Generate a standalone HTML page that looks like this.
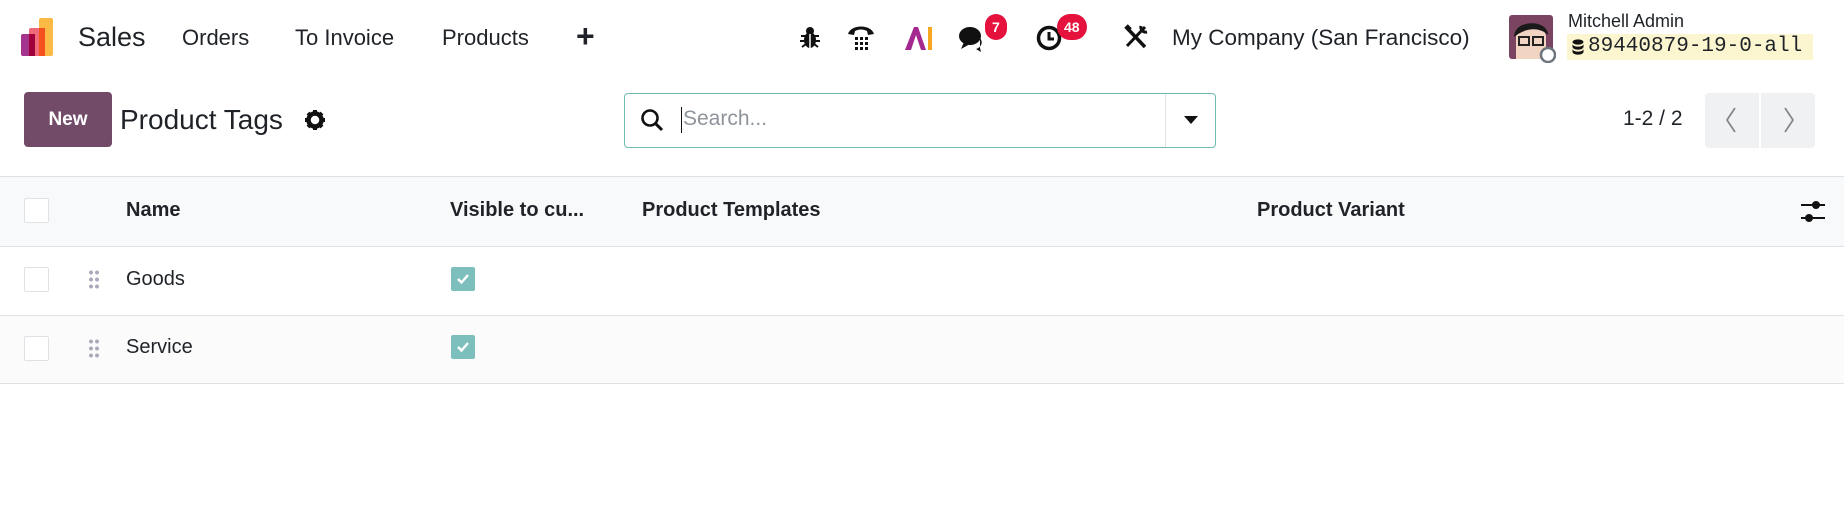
<!DOCTYPE html>
<html><head><meta charset="utf-8"><style>
*{box-sizing:border-box;margin:0;padding:0}
body{width:1844px;height:511px;background:#fff;font-family:"Liberation Sans",sans-serif;color:#1f2328;position:relative;overflow:hidden}
.a{position:absolute;white-space:nowrap}
.nav{font-size:22px}
.badge{position:absolute;background:#e4123c;color:#fff;font-size:14px;font-weight:bold;border-radius:14px;height:26px;line-height:26px;text-align:center;padding:0 7px}
.cb{position:absolute;width:25px;height:25px;border:1px solid #dee2e6;background:#fff;border-radius:2px}
.ck{position:absolute;width:24px;height:24px;background:#7dbfbd;border-radius:2px}
.th{font-size:20px;font-weight:bold;top:199px}
.td{font-size:20px}
.hl{position:absolute;left:0;width:1844px;height:1px;background:#dee2e6}
.grip{position:absolute;width:12px;height:20px;background-image:radial-gradient(circle,#aab 1.8px,transparent 2.2px);background-size:6px 7px}
</style></head><body>
<svg class="a" style="left:21px;top:16px" width="40" height="42" viewBox="0 0 40 42">
<rect x="0" y="18" width="12" height="22" rx="2" fill="#a4348d"/>
<rect x="8" y="12" width="12" height="28" rx="2" fill="#ef6a7a"/>
<rect x="8" y="18" width="6" height="22" fill="#a0003b"/>
<rect x="18" y="2" width="14" height="38" rx="2" fill="#fbb945"/>
<rect x="18" y="12" width="6" height="28" fill="#f4511e"/>
</svg>
<div class="a nav" style="left:78px;top:22px;font-size:27px">Sales</div>
<div class="a nav" style="left:182px;top:25px">Orders</div>
<div class="a nav" style="left:295px;top:25px">To Invoice</div>
<div class="a nav" style="left:442px;top:25px">Products</div>
<div class="a" style="left:576px;top:18px;font-size:32px;font-weight:bold">+</div>
<svg class="a" style="left:799px;top:26px" width="22" height="24" viewBox="0 0 22 24"><ellipse cx="11" cy="14" rx="6" ry="8" fill="#111"/><circle cx="11" cy="5" r="4" fill="#111"/><path d="M2 10h18M1 15h20M3 21l4-3M19 21l-4-3" stroke="#111" stroke-width="2"/><path d="M11 8v14" stroke="#fff" stroke-width="1.5"/></svg>
<svg class="a" style="left:846px;top:24px" width="30" height="28" viewBox="0 0 30 28"><path d="M2 10 C5 0 25 0 28 10 L22 11 L21 7 C17 5 13 5 9 7 L8 11Z" fill="#111"/><g fill="#111"><rect x="9" y="13" width="3" height="3"/><rect x="14" y="13" width="3" height="3"/><rect x="19" y="13" width="3" height="3"/><rect x="9" y="18" width="3" height="3"/><rect x="14" y="18" width="3" height="3"/><rect x="19" y="18" width="3" height="3"/><rect x="9" y="23" width="3" height="3"/><rect x="14" y="23" width="3" height="3"/><rect x="19" y="23" width="3" height="3"/></g></svg>
<svg class="a" style="left:904px;top:25px" width="30" height="26" viewBox="0 0 30 26"><path d="M1 25 L10 2 L14 2 L22 25 L17 25 L12 10 L7 25Z" fill="#a3288f"/><rect x="24" y="2" width="4" height="23" fill="#f6a61f"/></svg>
<svg class="a" style="left:958px;top:24px" width="30" height="28" viewBox="0 0 30 28"><ellipse cx="12" cy="12" rx="11" ry="9" fill="#111"/><path d="M6 18 L3 25 L12 20Z" fill="#111"/><path d="M22 14 a8 7 0 0 1 -4 11 l5 3 -1 -4" fill="#111"/></svg>
<div class="badge" style="left:985px;top:14px">7</div>
<svg class="a" style="left:1036px;top:24px" width="28" height="28" viewBox="0 0 28 28"><circle cx="13" cy="14" r="10.5" fill="none" stroke="#111" stroke-width="3.5"/><path d="M13 8v7h5" stroke="#111" stroke-width="3" fill="none"/></svg>
<div class="badge" style="left:1057px;top:14px">48</div>
<svg class="a" style="left:1123px;top:24px" width="26" height="26" viewBox="0 0 26 26"><path d="M4 4 L22 23" stroke="#111" stroke-width="3.5"/><path d="M3 2 L7 6" stroke="#111" stroke-width="5"/><path d="M22 3 L4 22" stroke="#111" stroke-width="3"/><path d="M18 2 a5 5 0 0 0 6 6" stroke="#111" stroke-width="3" fill="none"/></svg>
<div class="a nav" style="left:1172px;top:25px;font-size:22.5px">My Company (San Francisco)</div>
<svg class="a" style="left:1508px;top:15px" width="48" height="48" viewBox="0 0 48 48"><rect x="1" y="0" width="44" height="44" rx="3" fill="#7b4461"/><path d="M8 44 V22 C8 8 38 8 38 22 V44Z" fill="#f1d4c1"/><path d="M6 22 C6 4 40 4 40 20 C32 12 18 12 6 22Z" fill="#1a1a1a"/><rect x="11" y="22" width="10" height="8" fill="none" stroke="#222" stroke-width="2"/><rect x="25" y="22" width="10" height="8" fill="none" stroke="#222" stroke-width="2"/><circle cx="40" cy="40" r="7" fill="#fff" stroke="#6c757d" stroke-width="2.5"/></svg>
<div class="a" style="left:1568px;top:11px;font-size:18px">Mitchell Admin</div>
<div class="a" style="left:1567px;top:34px;width:246px;height:26px;background:#fcf6d0"></div>
<svg class="a" style="left:1572px;top:39px" width="12" height="16" viewBox="0 0 12 16"><ellipse cx="6" cy="3" rx="5.5" ry="2.6" fill="#111"/><path d="M0.5 5 v3 a5.5 2.6 0 0 0 11 0 v-3 a5.5 2.6 0 0 1 -11 0Z M0.5 10 v3 a5.5 2.6 0 0 0 11 0 v-3 a5.5 2.6 0 0 1 -11 0Z" fill="#111"/></svg>
<div class="a" style="left:1588px;top:35px;font-family:'Liberation Mono',monospace;font-size:21px">89440879-19-0-all</div>

<div class="a" style="left:24px;top:92px;width:88px;height:55px;background:#714b67;border-radius:4px;color:#fff;font-weight:bold;font-size:19px;text-align:center;line-height:55px">New</div>
<div class="a" style="left:120px;top:104px;font-size:28px">Product Tags</div>
<svg class="a" style="left:304px;top:109px" width="22" height="22" viewBox="0 0 22 22"><circle cx="11" cy="11" r="6.5" fill="none" stroke="#111" stroke-width="4.5"/><g stroke="#111" stroke-width="4"><path d="M11 1v5M11 16v5M1 11h5M16 11h5M4 4l3 3M15 15l3 3M18 4l-3 3M4 18l3-3"/></g></svg>
<div class="a" style="left:624px;top:93px;width:592px;height:55px;border:1px solid #71b8b0;border-radius:4px"></div>
<div class="a" style="left:1165px;top:94px;width:1px;height:53px;background:#dee2e6"></div>
<svg class="a" style="left:640px;top:108px" width="24" height="24" viewBox="0 0 24 24"><circle cx="10" cy="10" r="7.5" fill="none" stroke="#111" stroke-width="2.6"/><path d="M15.5 15.5L22 22" stroke="#111" stroke-width="3"/></svg>
<div class="a" style="left:681px;top:107px;width:1px;height:26px;background:#111"></div>
<div class="a" style="left:683px;top:107px;font-size:21px;color:#8d949b">Search...</div>
<svg class="a" style="left:1183px;top:115px" width="16" height="10" viewBox="0 0 16 10"><path d="M1 1h14L8 9Z" fill="#111"/></svg>
<div class="a" style="left:1623px;top:107px;font-size:21px">1-2 / 2</div>
<div class="a" style="left:1705px;top:93px;width:54px;height:55px;background:#f0f1f2;border-radius:4px 0 0 4px"></div>
<div class="a" style="left:1761px;top:93px;width:54px;height:55px;background:#f0f1f2;border-radius:0 4px 4px 0"></div>
<svg class="a" style="left:1724px;top:106px" width="14" height="28" viewBox="0 0 14 28"><path d="M11 2L3 14l8 12" stroke="#888" stroke-width="1.8" fill="none"/></svg>
<svg class="a" style="left:1782px;top:106px" width="14" height="28" viewBox="0 0 14 28"><path d="M3 2l8 12-8 12" stroke="#888" stroke-width="1.8" fill="none"/></svg>

<div class="a" style="left:0;top:176px;width:1844px;height:70px;background:#f8f9fb"></div>
<div class="a" style="left:0;top:316px;width:1844px;height:67px;background:#fbfbfb"></div>
<div class="hl" style="top:176px"></div>
<div class="hl" style="top:246px"></div>
<div class="hl" style="top:315px"></div>
<div class="hl" style="top:383px"></div>
<div class="cb" style="left:24px;top:198px"></div>
<div class="a th" style="left:126px">Name</div>
<div class="a th" style="left:450px">Visible to cu...</div>
<div class="a th" style="left:642px">Product Templates</div>
<div class="a th" style="left:1257px">Product Variant</div>
<svg class="a" style="left:1800px;top:201px" width="26" height="22" viewBox="0 0 26 22"><path d="M1 4h24M1 17h24" stroke="#111" stroke-width="2"/><circle cx="16" cy="4" r="4" fill="#111"/><circle cx="9" cy="17" r="4" fill="#111"/></svg>

<div class="cb" style="left:24px;top:267px"></div>
<div class="grip" style="left:88px;top:269px"></div>
<div class="a td" style="left:126px;top:268px">Goods</div>
<div class="ck" style="left:451px;top:267px"></div>
<svg class="a" style="left:456px;top:273px" width="14" height="12" viewBox="0 0 14 12"><path d="M2 6l3.5 3.5L12 2" stroke="#fff" stroke-width="2.4" fill="none"/></svg>

<div class="cb" style="left:24px;top:336px"></div>
<div class="grip" style="left:88px;top:338px"></div>
<div class="a td" style="left:126px;top:336px">Service</div>
<div class="ck" style="left:451px;top:335px"></div>
<svg class="a" style="left:456px;top:341px" width="14" height="12" viewBox="0 0 14 12"><path d="M2 6l3.5 3.5L12 2" stroke="#fff" stroke-width="2.4" fill="none"/></svg>
</body></html>
